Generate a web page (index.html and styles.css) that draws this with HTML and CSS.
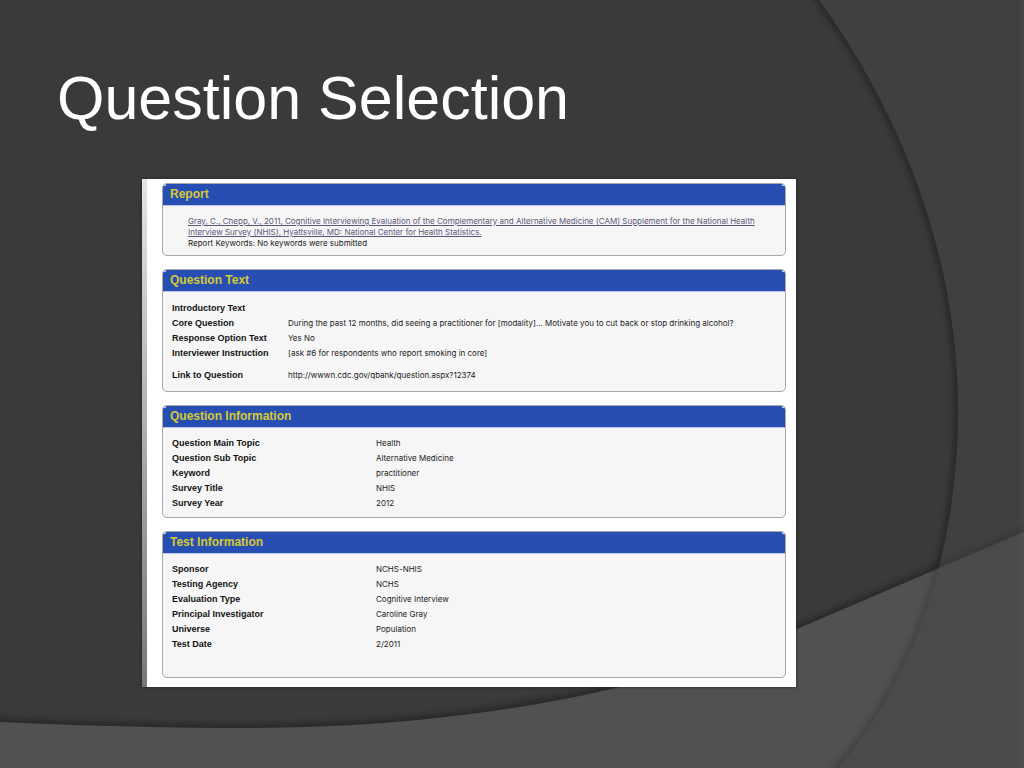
FILE: index.html
```html
<!DOCTYPE html>
<html lang="en">
<head>
<meta charset="utf-8">
<title>Question Selection</title>
<link rel="stylesheet" href="styles.css">
</head>
<body>
<main class="slide">
  <svg class="backdrop" viewBox="0 0 1024 768" preserveAspectRatio="none" aria-hidden="true">
    <defs>
      <filter id="soft" x="-10%" y="-10%" width="120%" height="120%" color-interpolation-filters="sRGB"><feGaussianBlur stdDeviation="3"/></filter>
      <clipPath id="waveClip"><path d="M0 722C90 726 170 728 250 728C480 728 670 685 797 629L1024 532V768H0Z"/></clipPath>
      <clipPath id="outside"><path d="M0 0H1024V532L797 629C670 685 480 728 250 728C170 728 90 726 0 722Z"/></clipPath>
      <clipPath id="inner"><path d="M0 0H819C905 119 958 262 958 410C958 545 918 675 838 768H0Z"/></clipPath>
    </defs>
    <path fill="#404040" d="M819 0C905 119 958 262 958 410C958 545 918 675 838 768H1024V0Z"/>
    <g clip-path="url(#inner)"><path class="shade" filter="url(#soft)" d="M805 -20L819 0C905 119 958 262 958 410C958 545 918 675 838 768"/></g>
    <g clip-path="url(#outside)">
      <g clip-path="url(#inner)"><path class="shade" filter="url(#soft)" d="M-40 720L0 722C90 726 170 728 250 728C480 728 670 685 797 629L1024 532"/></g>
      <path class="shade faint" filter="url(#soft)" d="M938 569L1110 495"/>
    </g>
    <g clip-path="url(#waveClip)">
      <rect width="1024" height="768" fill="#515151"/>
      <path fill="#4a4a4a" d="M819 0C905 119 958 262 958 410C958 545 918 675 838 768H1024V0Z"/>
      <g clip-path="url(#inner)"><path class="shade faint" filter="url(#soft)" d="M819 0C905 119 958 262 958 410C958 545 918 675 838 768L820 788"/></g>
    </g>
    <path class="edge" d="M1022 0V768"/>
  </svg>

  <h1 class="title">Question Selection</h1>

  <div class="sheet">
    <section class="panel">
      <h2 class="heading">Report</h2>
      <div class="citation">
        <a href="#report">Gray, C., Chepp, V., 2011, Cognitive Interviewing Evaluation of the Complementary and Alternative Medicine (CAM) Supplement for the National Health<br>Interview Survey (NHIS), Hyattsville, MD: National Center for Health Statistics.</a>
        <p class="keywords">Report Keywords: No keywords were submitted</p>
      </div>
    </section>

    <section class="panel">
      <h2 class="heading">Question Text</h2>
      <table class="fields narrow">
        <tr><th scope="row">Introductory Text</th><td></td></tr>
        <tr><th scope="row">Core Question</th><td>During the past 12 months, did seeing a practitioner for [modality]... Motivate you to cut back or stop drinking alcohol?</td></tr>
        <tr><th scope="row">Response Option Text</th><td>Yes No</td></tr>
        <tr><th scope="row">Interviewer Instruction</th><td>[ask #6 for respondents who report smoking in core]</td></tr>
        <tr class="spaced"><th scope="row">Link to Question</th><td>http://wwwn.cdc.gov/qbank/question.aspx?12374</td></tr>
      </table>
    </section>

    <section class="panel">
      <h2 class="heading">Question Information</h2>
      <table class="fields">
        <tr><th scope="row">Question Main Topic</th><td>Health</td></tr>
        <tr><th scope="row">Question Sub Topic</th><td>Alternative Medicine</td></tr>
        <tr><th scope="row">Keyword</th><td>practitioner</td></tr>
        <tr><th scope="row">Survey Title</th><td>NHIS</td></tr>
        <tr><th scope="row">Survey Year</th><td>2012</td></tr>
      </table>
    </section>

    <section class="panel last">
      <h2 class="heading">Test Information</h2>
      <table class="fields">
        <tr><th scope="row">Sponsor</th><td>NCHS-NHIS</td></tr>
        <tr><th scope="row">Testing Agency</th><td>NCHS</td></tr>
        <tr><th scope="row">Evaluation Type</th><td>Cognitive Interview</td></tr>
        <tr><th scope="row">Principal Investigator</th><td>Caroline Gray</td></tr>
        <tr><th scope="row">Universe</th><td>Population</td></tr>
        <tr><th scope="row">Test Date</th><td>2/2011</td></tr>
      </table>
    </section>
  </div>
</main>
</body>
</html>
```
FILE: styles.css
```css
* { box-sizing: border-box; }

body {
  margin: 0;
  background: #3a3a3a;
  font-family: "Liberation Sans", Arial, sans-serif;
}

.slide {
  position: relative;
  min-height: 100vh;
  padding: 62px 228px 60px 142px;
}

.backdrop {
  position: absolute;
  inset: 0;
  width: 100%;
  height: 100%;
}

.shade {
  fill: none;
  stroke: #262626;
  stroke-width: 7;
}

.faint { stroke-opacity: 0.4; }

.edge {
  fill: none;
  stroke: #ffffff;
  stroke-opacity: 0.03;
  stroke-width: 5;
}

.title {
  position: relative;
  margin: 0 0 45px -85px;
  color: #ffffff;
  font-size: 61px;
  font-weight: 400;
  line-height: 72px;
  white-space: nowrap;
}

.sheet {
  position: relative;
  display: flex;
  flex-direction: column;
  gap: 13px;
  padding: 4px 10px 9px 15px;
  border-style: solid;
  border-image: linear-gradient(#e4e4e4, #777777) 1;
  border-width: 0 0 0 5px;
  background: #ffffff;
  color: #222222;
  font-size: 9px;
  line-height: 11px;
  box-shadow: 0 0 3px #222222;
}

.panel {
  overflow: hidden;
  padding-bottom: 6px;
  border: 1px solid #a8a8a8;
  border-radius: 5px;
  background: #f6f6f6;
}

.last { padding-bottom: 25px; }

.heading {
  position: relative;
  margin: 0;
  padding: 0 7px;
  border-bottom: 1px solid #b9c5e6;
  background: #274eb3;
  color: #d8ca32;
  font-size: 12px;
  line-height: 21px;
}

.heading::before,
.heading::after {
  content: "";
  position: absolute;
  top: 0;
  width: 3px;
  height: 2px;
  background: #c3cfee;
}

.heading::before { left: 0; }

.heading::after { right: 0; }

.citation {
  padding: 10px 10px 0 25px;
  font-family: Inter, Arial, sans-serif;
  font-size: 8px;
}

.citation a { color: #5c5678; }

.keywords { margin: 0; }

.fields {
  width: 100%;
  margin-top: 8px;
  border-collapse: collapse;
  table-layout: fixed;
}

.fields th,
.fields td {
  height: 15px;
  padding: 0;
  text-align: left;
}

.fields td {
  font-family: Inter, Arial, sans-serif;
  font-size: 8px;
}

.fields th {
  width: 213px;
  padding-left: 9px;
  color: #111111;
}

.narrow { margin: 9px 0 2px; }

.narrow th { width: 125px; }

.fields .spaced th,
.fields .spaced td {
  height: 22px;
  padding-top: 7px;
}
```
